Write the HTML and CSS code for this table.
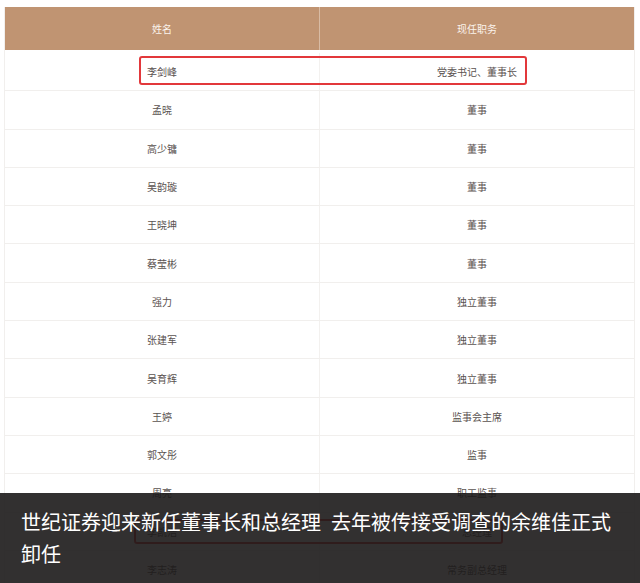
FILE: index.html
```html
<!DOCTYPE html>
<html lang="zh-CN">
<head>
<meta charset="utf-8">
<title>世纪证券迎来新任董事长和总经理</title>
<link rel="stylesheet" href="styles.css">
</head>
<body>
<div class="page">
  <div class="table">
    <div class="row head"><div class="cell">姓名</div><div class="cell">现任职务</div></div>
    <div class="body">
      <div class="row"><div class="cell">李剑峰</div><div class="cell">党委书记、董事长</div></div>
      <div class="row"><div class="cell">孟晓</div><div class="cell">董事</div></div>
      <div class="row"><div class="cell">高少镛</div><div class="cell">董事</div></div>
      <div class="row"><div class="cell">吴韵璇</div><div class="cell">董事</div></div>
      <div class="row"><div class="cell">王晓坤</div><div class="cell">董事</div></div>
      <div class="row"><div class="cell">蔡莹彬</div><div class="cell">董事</div></div>
      <div class="row"><div class="cell">强力</div><div class="cell">独立董事</div></div>
      <div class="row"><div class="cell">张建军</div><div class="cell">独立董事</div></div>
      <div class="row"><div class="cell">吴育辉</div><div class="cell">独立董事</div></div>
      <div class="row"><div class="cell">王婷</div><div class="cell">监事会主席</div></div>
      <div class="row"><div class="cell">郭文彤</div><div class="cell">监事</div></div>
      <div class="row"><div class="cell">周亮</div><div class="cell">职工监事</div></div>
      <div class="row"><div class="cell">李凯浩</div><div class="cell">总经理</div></div>
      <div class="row"><div class="cell">李志涛</div><div class="cell">常务副总经理</div></div>
      <div class="mark mark-1"></div>
      <div class="mark mark-2"></div>
    </div>
  </div>
  <div class="caption">世纪证券迎来新任董事长和总经理&ensp;去年被传接受调查的余维佳正式卸任</div>
</div>
</body>
</html>
```
FILE: styles.css
```css
html, body {
  margin: 0;
  padding: 0;
  background: #ffffff;
}
.page {
  position: relative;
  width: 640px;
  height: 583px;
  overflow: hidden;
  font-family: "Noto Sans CJK SC", "Noto Sans", sans-serif;
}
.table {
  margin: 7px 5px 0 4px;
  border-left: 1px solid #f1efed;
  border-right: 1px solid #f1efed;
}
.row {
  display: grid;
  grid-template-columns: 315px 1fr;
  box-sizing: border-box;
  height: 38.3px;
  border-bottom: 1px solid #f1efed;
  font-size: 10px;
  color: #5a5250;
}
.row .cell {
  display: flex;
  align-items: center;
  justify-content: center;
}
.row .cell:first-child {
  border-right: 1px solid #f3f1ef;
}
.row.head {
  height: 43px;
  background: #c09472;
  color: #fbf3ec;
  border-bottom: none;
  margin-bottom: 3px;
}
.row.head .cell:first-child {
  border-right: 1px solid #d8bba4;
}
.body {
  position: relative;
}
.mark {
  position: absolute;
  border: 2px solid #e2383b;
  border-radius: 3px;
  box-sizing: border-box;
}
.mark-1 {
  left: 134px;
  top: 3px;
  width: 388px;
  height: 29px;
}
.mark-2 {
  left: 129px;
  top: 466px;
  width: 369px;
  height: 25px;
}
.caption {
  position: absolute;
  left: 0;
  right: 0;
  bottom: 0;
  height: 90px;
  box-sizing: border-box;
  padding: 13px 26px 13px 21px;
  background: rgba(28, 26, 26, 0.9);
  color: #ffffff;
  font-size: 20px;
  line-height: 32px;
}
```
